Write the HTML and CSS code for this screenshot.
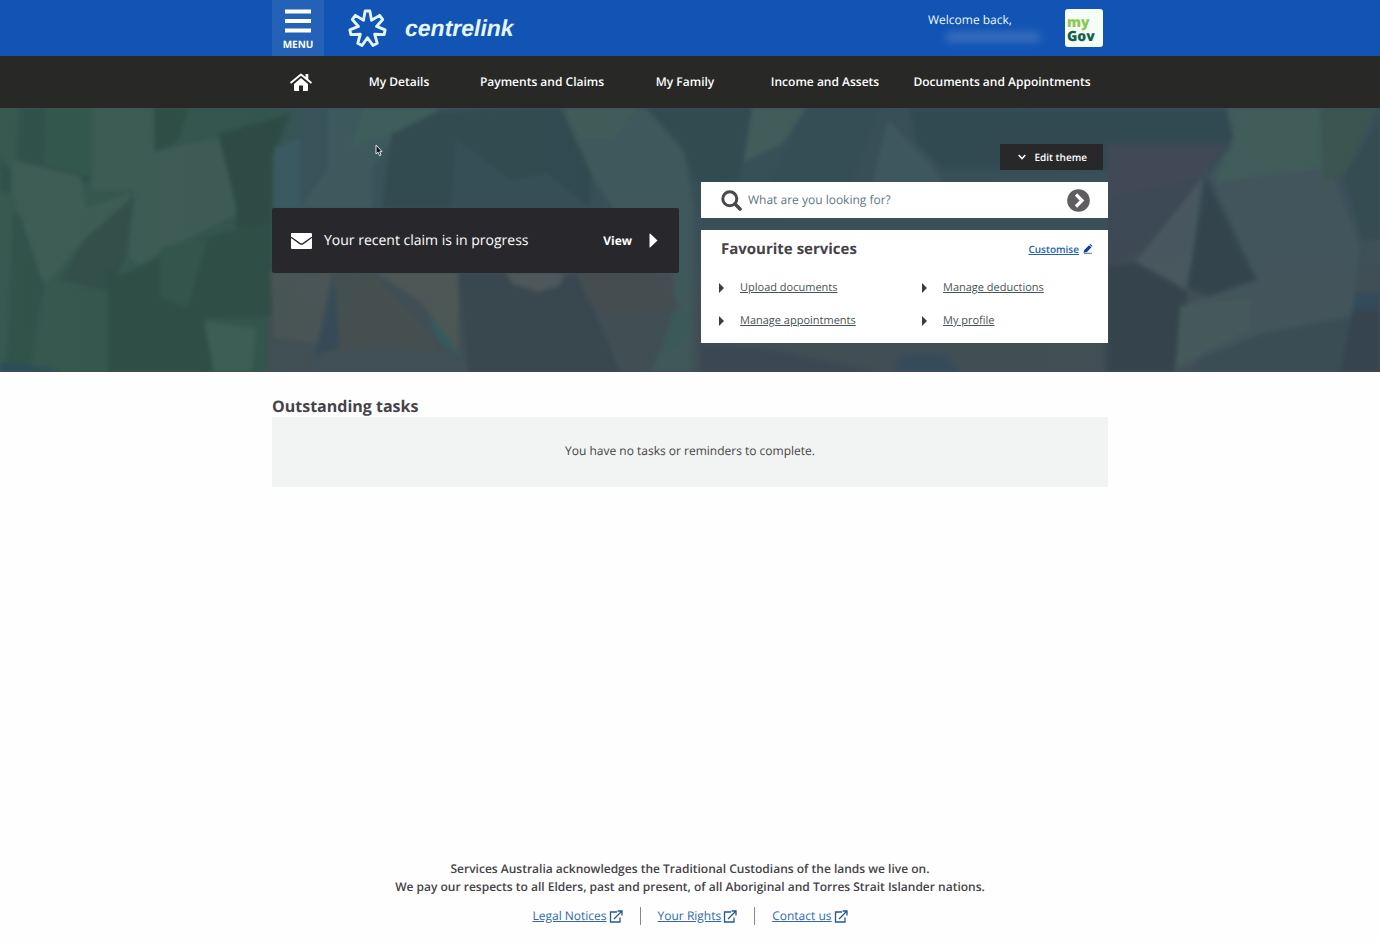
FILE: index.html
```html
<!DOCTYPE html>
<html lang="en">
<head>
<meta charset="utf-8">
<meta name="viewport" content="width=device-width, initial-scale=1">
<title>Centrelink</title>
<link rel="stylesheet" href="styles.css">
</head>
<body>
<header class="topbar">
  <div class="wrap topbar-inner">
    <button class="menu-button" type="button">
      <svg class="menu-icon" viewBox="0 0 26 24" aria-hidden="true"><path d="M0 2.5h26M0 12h26M0 21.5h26" stroke="#fff" stroke-width="4"/></svg>
      <span>MENU</span>
    </button>
    <a class="brand" href="#">
      <svg class="brand-star" viewBox="-19 -19 38 38" aria-hidden="true"><path d="M-2.3-17L2.3-17L3.9-8.1L11.800-12.800L14.800-8.800L8.800-2L17.200 1.300L16.200 6L7 5.600L9.500 14.400L5.300 16.500L0 9L-5.300 16.500L-9.500 14.400L-7 5.600L-16.200 6L-17.200 1.300L-8.800-2L-14.800-8.800L-11.800-12.800L-3.900-8.100Z" fill="none" stroke="#e4f6ff" stroke-width="2.8" stroke-linejoin="round"/></svg>
      <span>centrelink</span>
    </a>
    <div class="welcome">
      <span>Welcome back,</span>
      <span class="hidden-name" aria-hidden="true"></span>
    </div>
    <a class="mygov" href="#"><span class="mygov-my">my</span><span class="mygov-gov">Gov</span></a>
  </div>
</header>
<nav class="mainnav" aria-label="Main">
  <div class="wrap mainnav-inner">
    <a href="#" aria-label="Home"><svg class="home-icon" viewBox="0 0 22 18" aria-hidden="true"><path d="M11 5L18 11V17a1 1 0 0 1-1 1H13V12.500H9V18H5a1 1 0 0 1-1-1V11Z" fill="#fff"/><path d="M1.200 9.600L11 1.500L20.800 9.600" fill="none" stroke="#fff" stroke-width="1.900" stroke-linecap="round" stroke-linejoin="round"/><path d="M15.500 1H18.300V7L15.500 4.600Z" fill="#fff"/></svg></a>
    <a href="#">My Details</a>
    <a href="#">Payments and Claims</a>
    <a href="#">My Family</a>
    <a href="#">Income and Assets</a>
    <a href="#">Documents and Appointments</a>
  </div>
</nav>
<main>
  <section class="hero">
    <svg class="hero-art" viewBox="0 0 1380 264" preserveAspectRatio="none" aria-hidden="true">
      <defs>
        <linearGradient id="base" x1="0" x2="1" y1="0" y2="0">
          <stop offset="0" stop-color="#375950"/><stop offset=".19" stop-color="#34554d"/><stop offset=".22" stop-color="#385359"/><stop offset=".5" stop-color="#374f57"/><stop offset="1" stop-color="#3b505a"/>
        </linearGradient>
        <linearGradient id="dusk" x1="0" x2="0" y1="0" y2="1">
          <stop offset=".35" stop-color="#434e54" stop-opacity="0"/><stop offset=".75" stop-color="#434e54" stop-opacity=".8"/>
        </linearGradient>
        <filter id="soft" x="0" y="0" width="1" height="1" color-interpolation-filters="sRGB"><feGaussianBlur stdDeviation="2"/></filter>
      </defs>
      <rect width="1380" height="264" fill="url(#base)"/>
      <rect x="268" width="1112" height="264" fill="url(#dusk)"/>
      <g filter="url(#soft)" opacity=".85">
        <path d="M20 0H90L92 72L85 76L17 52Z" fill="#30504a"/>
        <path d="M46 0H94V70L44 56Z" fill="#34574d"/>
        <path d="M12 52L80 68L86 100L130 85L132 120L84 132L48 174L40 172L12 84Z" fill="#3f5e56"/>
        <path d="M92 0H154V44L218 30L228 60L236 106L160 144L140 158L128 148L134 82H92Z" fill="#3f5d56"/>
        <path d="M154 0H188L178 34L155 44Z" fill="#2e4d45"/>
        <path d="M218 26L290 6L272 50V118L236 120V96Z" fill="#2c4a43"/>
        <path d="M14 104L20 108L44 178L30 264H6Z" fill="#30524a"/>
        <path d="M0 48L12 66L10 86L0 82Z" fill="#2f5048"/>
        <path d="M84 132L134 88L126 150L108 184L60 172Z" fill="#324f49"/>
        <path d="M120 168L200 130L272 114V208L204 210L214 264H108V160Z" fill="#2e4d45"/>
        <path d="M160 140L208 130L188 200L160 190Z" fill="#34554c"/>
        <path d="M204 214L256 220L252 264H214Z" fill="#3f6056"/>
        <path d="M0 254L50 260L60 264H0Z" fill="#2c4b5c"/>
        <path d="M274 40L300 30L300 100H274Z" fill="#3c5b64"/>
        <path d="M328 0H440L390 34L372 60V100H300L328 60Z" fill="#3e5b60"/>
        <path d="M364 0H440L398 24L350 40Z" fill="#40605c"/>
        <path d="M440 4L560 0L592 66L590 100H382L392 26Z" fill="#304a50"/>
        <path d="M456 30L512 72L546 64L590 100H450Z" fill="#364f56"/>
        <path d="M562 0H650L684 44L694 100L692 264H650L680 200L594 72Z" fill="#405a5c"/>
        <path d="M566 0H638L612 30H580Z" fill="#435f59"/>
        <path d="M646 0H752L738 74H696L682 40Z" fill="#314b51"/>
        <path d="M752 0H806L782 36L744 54Z" fill="#42605b"/>
        <path d="M806 0H880L850 74H770L790 38Z" fill="#354d54"/>
        <path d="M888 12L928 54L944 76H872Z" fill="#40585f"/>
        <path d="M910 0H1232V30L1210 62H944L916 34Z" fill="#304a51"/>
        <path d="M330 164L374 166L432 230L450 264H318Z" fill="#46504f"/>
        <path d="M270 164H332L318 236L274 230Z" fill="#4b5656"/>
        <path d="M334 166L340 240L314 248L324 210Z" fill="#354b58"/>
        <path d="M376 164H458V246L424 196Z" fill="#505956"/>
        <path d="M426 202L452 234L462 250L438 232Z" fill="#345d5e"/>
        <path d="M314 250L380 238L460 248L480 264H310Z" fill="#414f58"/>
        <path d="M458 164L508 166L540 182L578 164L610 240L620 264H468Z" fill="#38464f"/>
        <path d="M506 164H564L560 178L538 184L512 176Z" fill="#51595a"/>
        <path d="M575 164H672L674 202L612 206L590 196Z" fill="#464d4f"/>
        <path d="M674 200L692 205L684 232L658 250L664 230Z" fill="#3b5b57"/>
        <path d="M1106 36H1226L1205 66L1110 92Z" fill="#434856"/>
        <path d="M1108 90L1206 68L1140 146L1108 158Z" fill="#3e4854"/>
        <path d="M1202 70L1188 182L1136 154Z" fill="#4b5961"/>
        <path d="M1206 70L1256 172L1210 188L1187 180Z" fill="#33434c"/>
        <path d="M1226 0H1320L1335 70L1360 140L1352 208L1260 226L1174 264L1180 198L1258 172L1210 68L1234 34Z" fill="#44565d"/>
        <path d="M1228 0H1320L1322 60L1216 74L1236 26Z" fill="#42605b"/>
        <path d="M1320 0H1376L1345 66L1324 74Z" fill="#3d564f"/>
        <path d="M1374 20L1380 0V130L1362 132L1344 68Z" fill="#334c51"/>
        <path d="M1106 158L1136 154L1188 184L1174 264H1106Z" fill="#34424c"/>
        <path d="M1180 198L1250 192L1250 220L1176 258Z" fill="#475c5c"/>
        <path d="M1200 250L1260 226L1352 208L1342 264H1194Z" fill="#394d56"/>
        <path d="M1356 185H1380V264H1340Z" fill="#35434f"/>
        <path d="M1356 186H1380V202H1352Z" fill="#324b5e"/>
        <path d="M700 236L770 242L880 264H700Z" fill="#3b4754"/>
        <path d="M900 246H946L960 264H894Z" fill="#354b5b"/>
      </g>
    </svg>
    <svg class="cursor" viewBox="0 0 8 13" aria-hidden="true"><path d="M1 1V10L3 8.200L4.500 11.700L6 11L4.700 7.800L7 7.500Z" fill="#101618" stroke="#dde8e8" stroke-width="1"/></svg>
    <div class="wrap hero-inner">
      <a class="claim" href="#">
        <svg class="mail-icon" viewBox="0 0 21 16" aria-hidden="true"><rect width="21" height="16" rx="1" fill="#fff"/><path d="M0 4.200L9 10.600Q10.500 11.500 12 10.600L21 4.200" fill="none" stroke="#28282c" stroke-width="1.400"/></svg>
        <span class="claim-text">Your recent claim is in progress</span>
        <strong>View</strong>
        <svg class="play-icon" viewBox="0 0 9 15" aria-hidden="true"><path d="M.5 1Q.5 0 1.400.7L8.500 7.500L1.400 14.300Q.5 15 .5 14Z" fill="#fff"/></svg>
      </a>
      <div class="services">
        <button class="theme-button" type="button">
          <svg class="chevron" viewBox="0 0 8 6" aria-hidden="true"><path d="M.7 1L4 4.600L7.300 1" fill="none" stroke="#fff" stroke-width="1.500"/></svg>
          Edit theme
        </button>
        <form class="search">
          <label for="q" aria-label="Search"><svg class="search-icon" viewBox="0 0 21 21" aria-hidden="true"><circle cx="8.800" cy="8.800" r="7" fill="none" stroke="#4a484c" stroke-width="3"/><path d="M14 14L19 19" stroke="#4a484c" stroke-width="3.600" stroke-linecap="round"/></svg></label>
          <input id="q" type="text" placeholder="What are you looking for?">
          <button class="go-button" type="submit" aria-label="Go"><svg class="go-icon" viewBox="0 0 23 23" aria-hidden="true"><circle cx="11.500" cy="11.500" r="11.300" fill="#5f5d60"/><path d="M9 5.500L15 11.500L9 17.500" fill="none" stroke="#fff" stroke-width="3.200"/></svg></button>
        </form>
        <div class="card">
          <div class="card-head">
            <h2>Favourite services</h2>
            <a href="#"><span>Customise</span><svg class="pencil" viewBox="0 0 10 10" aria-hidden="true"><path d="M.5 9L1.300 6L6 1.200L8.500 3.300L4 8L1.500 8.600ZM6.600.7L7.300.1L9.600 2L9 2.700Z" fill="#143f97"/><path d="M1 9.300H9" stroke="#4674b4" stroke-width="1"/></svg></a>
          </div>
          <ul class="links">
            <li><a href="#">Upload documents</a></li>
            <li><a href="#">Manage deductions</a></li>
            <li><a href="#">Manage appointments</a></li>
            <li><a href="#">My profile</a></li>
          </ul>
        </div>
      </div>
    </div>
  </section>
  <section class="wrap tasks">
    <h2>Outstanding tasks</h2>
    <p>You have no tasks or reminders to complete.</p>
  </section>
</main>
<footer class="footer">
  <p>Services Australia acknowledges the Traditional Custodians of the lands we live on.<br>We pay our respects to all Elders, past and present, of all Aboriginal and Torres Strait Islander nations.</p>
  <ul>
    <li><a href="#"><span>Legal Notices</span><svg class="ext" viewBox="0 0 14 13" aria-hidden="true"><path d="M8 2H1.500V12H11V7.500M5 9L12.500 1.500M8.500 1H13V5.500" fill="none" stroke="#235896" stroke-width="1.300"/></svg></a></li>
    <li><a href="#"><span>Your Rights</span><svg class="ext" viewBox="0 0 14 13" aria-hidden="true"><path d="M8 2H1.500V12H11V7.500M5 9L12.500 1.500M8.500 1H13V5.500" fill="none" stroke="#235896" stroke-width="1.300"/></svg></a></li>
    <li><a href="#"><span>Contact us</span><svg class="ext" viewBox="0 0 14 13" aria-hidden="true"><path d="M8 2H1.500V12H11V7.500M5 9L12.500 1.500M8.500 1H13V5.500" fill="none" stroke="#235896" stroke-width="1.300"/></svg></a></li>
  </ul>
</footer>
</body>
</html>
```
FILE: styles.css
```css
* { box-sizing: border-box; }

body {
  margin: 0;
  min-height: 100vh;
  display: flex;
  flex-direction: column;
  background: #fefefe;
  color: #454347;
  font: 12px/18px "Open Sans", "Noto Sans", sans-serif;
  text-rendering: geometricPrecision;
}

h2, p, ul { margin: 0; padding: 0; }
ul { list-style: none; }
button, input { font: inherit; border: 0; padding: 0; text-rendering: inherit; }
svg { display: block; flex: none; }

.wrap { width: 100%; max-width: 836px; margin: 0 auto; }

/* Top bar */
.topbar { background: #1154b3; color: #f0f8ff; }
.topbar-inner { display: flex; align-items: center; height: 56px; }
.menu-button {
  display: flex;
  flex-direction: column;
  align-items: center;
  gap: 4px;
  width: 52px;
  height: 56px;
  padding-top: 9px;
  background: #2462b7;
  color: #fff;
  font-size: 10px;
  line-height: 14px;
  font-weight: 700;
}
.menu-icon { width: 26px; height: 24px; }
.brand {
  display: flex;
  align-items: center;
  gap: 18px;
  margin-left: 24px;
  color: #e4f6ff;
  font: italic bold 23px/28px "Liberation Sans", Arial, sans-serif;
  text-decoration: none;
}
.brand-star { width: 39px; height: 39px; }
.welcome { display: flex; flex-direction: column; width: 137px; margin-left: auto; padding-bottom: 4px; }
.hidden-name {
  width: 96px;
  height: 10px;
  margin: 3px 0 0 17px;
  border-radius: 5px;
  background: #3a70be;
  filter: blur(4px);
}
.mygov {
  display: flex;
  flex-direction: column;
  width: 38px;
  height: 38px;
  padding: 7px 0 0 2px;
  margin-right: 5px;
  border-radius: 3px;
  background: #f6fcf6;
  font: 800 14px/14px "Open Sans", sans-serif;
  text-decoration: none;
}
.mygov-my { color: #8cc751; }
.mygov-gov { color: #10604c; }

/* Main navigation */
.mainnav { background: #282827; }
.mainnav-inner {
  display: grid;
  grid-template-columns: 58fr 138fr 148fr 138fr 142fr 212fr;
  align-items: center;
  justify-items: center;
  height: 52px;
}
.mainnav a { color: #fff; font-weight: 600; text-decoration: none; white-space: nowrap; }
.home-icon { width: 22px; height: 18px; }

/* Hero */
.hero { position: relative; background: #384f55; }
.hero-art { position: absolute; inset: 0; width: 100%; height: 100%; }
.cursor { position: absolute; left: 375px; top: 36px; width: 8px; height: 13px; }
.hero-inner {
  position: relative;
  display: grid;
  grid-template-columns: 1fr 1fr;
  gap: 22px;
  align-items: start;
  padding: 36px 0 29px;
}
.claim {
  display: flex;
  align-items: center;
  height: 65px;
  margin-top: 64px;
  padding: 0 21px 0 19px;
  border-radius: 2px;
  background: #28282c;
  color: #fff;
  text-decoration: none;
}
.mail-icon { width: 21px; height: 16px; margin-right: 12px; }
.claim-text { flex: 1; font-size: 14px; }
.play-icon { width: 9px; height: 15px; margin-left: 17px; }
.services { display: flex; flex-direction: column; }
.theme-button {
  display: flex;
  align-items: center;
  align-self: flex-end;
  gap: 8px;
  height: 26px;
  padding: 0 16px 0 18px;
  margin: 0 5px 12px 0;
  background: #28282b;
  color: #fff;
  font-size: 10px;
  font-weight: 600;
}
.chevron { width: 8px; height: 6px; }
.search {
  display: flex;
  align-items: center;
  height: 36px;
  padding: 0 18px 0 20px;
  margin-bottom: 12px;
  background: #fff;
}
.search-icon { width: 21px; height: 21px; }
.search input { flex: 1; min-width: 0; margin-left: 6px; background: none; color: #4d6773; }
.search input::placeholder { color: #5d7884; opacity: 1; }
.go-button { background: none; }
.go-icon { width: 23px; height: 23px; }
.card { padding: 9px 15px 13px 20px; background: #fff; }
.card-head { display: flex; align-items: center; justify-content: space-between; }
.card-head h2 { font-size: 15px; line-height: 20px; }
.card-head a { display: flex; align-items: center; gap: 4px; color: #2362ad; font-size: 10px; font-weight: 600; text-decoration: none; }
.card-head a span { text-decoration: underline; }
.pencil { width: 10px; height: 10px; }
.links { display: grid; grid-template-columns: 1fr 1fr; column-gap: 34px; row-gap: 15px; margin-top: 20px; }
.links li { display: flex; align-items: center; gap: 16px; font-size: 11px; white-space: nowrap; }
.links li::before {
  content: "";
  margin-left: -2px;
  border: 5px solid transparent;
  border-left-color: #3e3c40;
  border-right-width: 0;
}
.links a { color: #4a5356; }

/* Tasks */
.tasks { padding-top: 23px; }
.tasks h2 { font-size: 16px; line-height: 22px; }
.tasks p { padding: 25px 16px 27px; background: #f2f3f3; text-align: center; }

/* Footer */
.footer { margin-top: auto; padding-bottom: 17px; text-align: center; }
.footer p { font-weight: 600; }
.footer ul { display: flex; justify-content: center; margin-top: 11px; }
.footer li + li { margin-left: 17px; padding-left: 17px; border-left: 1px solid #88888c; }
.footer a { display: flex; align-items: center; gap: 2px; color: #2e69ac; text-decoration: none; }
.footer a span { text-decoration: underline; }
.ext { width: 14px; height: 13px; }
```
